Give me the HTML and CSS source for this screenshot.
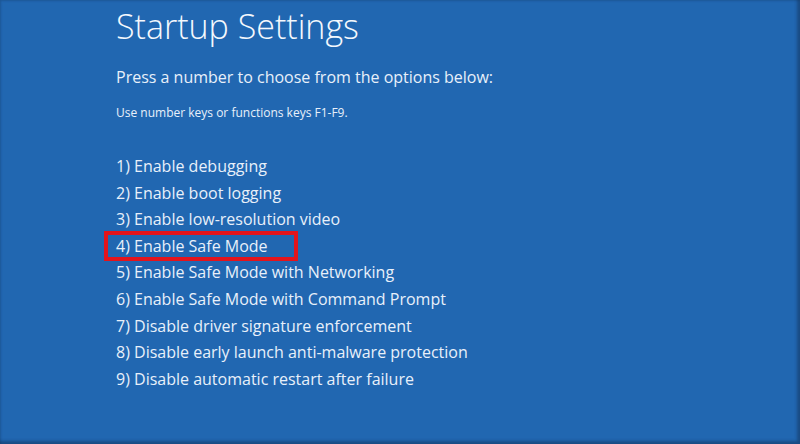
FILE: index.html
```html
<!DOCTYPE html>
<html lang="en">
<head>
    <meta charset="UTF-8">
    <title>Startup Settings</title>
    <link rel="stylesheet" href="styles.css">
</head>
<body>
    <div class="screen">
        <h1 class="title">Startup Settings</h1>
        <p class="lead">Press a number to choose from the options below:</p>
        <p class="hint">Use number keys or functions keys F1-F9.</p>
        <ul class="options">
            <li>1) Enable debugging</li>
            <li>2) Enable boot logging</li>
            <li>3) Enable low-resolution video</li>
            <li class="marked">4) Enable Safe Mode</li>
            <li>5) Enable Safe Mode with Networking</li>
            <li>6) Enable Safe Mode with Command Prompt</li>
            <li>7) Disable driver signature enforcement</li>
            <li>8) Disable early launch anti-malware protection</li>
            <li>9) Disable automatic restart after failure</li>
        </ul>
    </div>
</body>
</html>
```

FILE: styles.css
```css
html, body {
    margin: 0;
    padding: 0;
}
body {
    width: 800px;
    height: 444px;
    overflow: hidden;
    font-family: "Open Sans", "Noto Sans", sans-serif;
    color: #e8f0fa;
}
.screen {
    box-sizing: border-box;
    width: 800px;
    height: 444px;
    background-color: #2167b1;
    box-shadow: inset -3px -3px 3px rgba(20, 50, 90, 0.5), inset 1px 1px 2px rgba(20, 50, 90, 0.3);
    padding: 0 0 0 116px;
}
.title {
    margin: 0;
    padding-top: 3px;
    font-size: 34px;
    font-weight: 300;
    line-height: 46px;
    color: #f4f8fd;
}
.lead {
    margin: 17px 0 0;
    font-size: 16px;
    line-height: 22px;
}
.hint {
    margin: 17px 0 0;
    font-size: 12px;
    line-height: 16px;
}
.options {
    list-style: none;
    margin: 32px 0 0;
    padding: 0;
    font-size: 16px;
}
.options li {
    line-height: 26.6px;
}
.options li.marked {
    outline: 4px solid #e3141c;
    outline-offset: -2px;
    width: 180px;
    margin-left: -10px;
    padding-left: 10px;
}
```
